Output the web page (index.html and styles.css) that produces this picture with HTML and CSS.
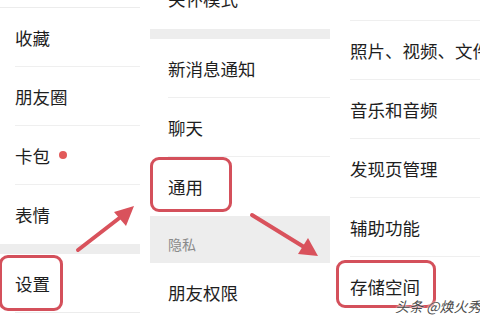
FILE: index.html
```html
<!DOCTYPE html>
<html lang="zh">
<head>
<meta charset="utf-8">
<link rel="stylesheet" href="styles.css">
</head>
<body>
<div class="stage">
  <section class="panel p1">
    <div class="head-gap"></div>
    <div class="row"><span>收藏</span></div>
    <div class="row"><span>朋友圈</span></div>
    <div class="row"><span>卡包</span><i class="dot"></i></div>
    <div class="row last"><span>表情</span></div>
    <div class="band"></div>
    <div class="row"><span>设置</span></div>
  </section>
  <section class="panel p2">
    <div class="cut"><span>关怀模式</span></div>
    <div class="band"></div>
    <div class="row"><span>新消息通知</span></div>
    <div class="row"><span>聊天</span></div>
    <div class="row last"><span>通用</span></div>
    <div class="band label"><span>隐私</span></div>
    <div class="row last"><span>朋友权限</span></div>
  </section>
  <section class="panel p3">
    <div class="head-gap"></div>
    <div class="row"><span>照片、视频、文件和通话</span></div>
    <div class="row"><span>音乐和音频</span></div>
    <div class="row"><span>发现页管理</span></div>
    <div class="row"><span>辅助功能</span></div>
    <div class="row last"><span>存储空间</span></div>
  </section>

  <div class="mark m1"></div>
  <div class="mark m2"></div>
  <div class="mark m3"></div>

  <svg class="arrows" width="480" height="320" viewBox="0 0 480 320">
    <g stroke="#d9525c" stroke-width="4" stroke-linecap="round" fill="#d9525c">
      <line x1="78" y1="250" x2="122" y2="216"/>
      <polygon stroke="none" points="134,206 114,212 126,226"/>
      <line x1="252" y1="215" x2="304" y2="247"/>
      <polygon stroke="none" points="318,256 298,254 308,238"/>
    </g>
  </svg>

  <div class="watermark">头条 @焕火秀</div>
</div>
</body>
</html>
```

FILE: styles.css
```css
* { box-sizing: border-box; margin: 0; padding: 0; }
html, body { width: 480px; height: 320px; overflow: hidden; background: #fff; }
body {
  font-family: "Noto Sans CJK SC", "Noto Sans", sans-serif;
  color: #1e1e1e;
}
.stage {
  position: relative;
  width: 480px;
  height: 320px;
  display: flex;
  overflow: hidden;
}
.panel {
  display: flex;
  flex-direction: column;
  background: #fff;
  overflow: hidden;
}
.p1 { width: 140px; }
.p2 { width: 180px; margin-left: 10px; }
.p3 { width: 150px; }

.head-gap { height: 8px; border-bottom: 1px solid #ececec; flex: none; }
.p3 .head-gap { height: 21px; margin-left: 20px; border-bottom-color: #efefef; }

.row {
  flex: none;
  height: 59px;
  display: flex;
  align-items: center;
  font-size: 17.5px;
  border-bottom: 1px solid #efefef;
  white-space: nowrap;
}
.row.last { border-bottom: none; }
.p1 .row { margin-left: 15px; }
.p2 .row { margin-left: 18px; }
.p3 .row { margin-left: 20px; }
.p1 .row:last-child { height: 59px; border-bottom: 1px solid #ececec; }

.dot {
  width: 8px; height: 8px;
  border-radius: 50%;
  background: #e25a5a;
  margin-left: 9px;
}

.band { flex: none; height: 10px; background: #ededed; }
.band.label {
  height: 47px;
  display: flex;
  align-items: center;
  padding: 8px 0 0 18px;
  font-size: 14px;
  color: #8a8a8a;
}

.cut {
  flex: none;
  height: 29px;
  padding-left: 18px;
  font-size: 17.5px;
  line-height: 20px;
  overflow: hidden;
}
.cut span { display: block; margin-top: -11px; }

.mark {
  position: absolute;
  border: 3px solid #d4505b;
  border-radius: 9px;
}
.m1 { left: -1px; top: 255px; width: 64px; height: 56px; }
.m2 { left: 150px; top: 157px; width: 82px; height: 55px; }
.m3 { left: 336px; top: 260px; width: 100px; height: 48px; }

.arrows { position: absolute; left: 0; top: 0; }

.watermark {
  position: absolute;
  left: 395px;
  top: 296px;
  font-size: 14px;
  font-style: italic;
  color: #4a4a4a;
  white-space: nowrap;
  text-shadow: 0 0 2px #fff, 0 0 2px #fff;
}
```
